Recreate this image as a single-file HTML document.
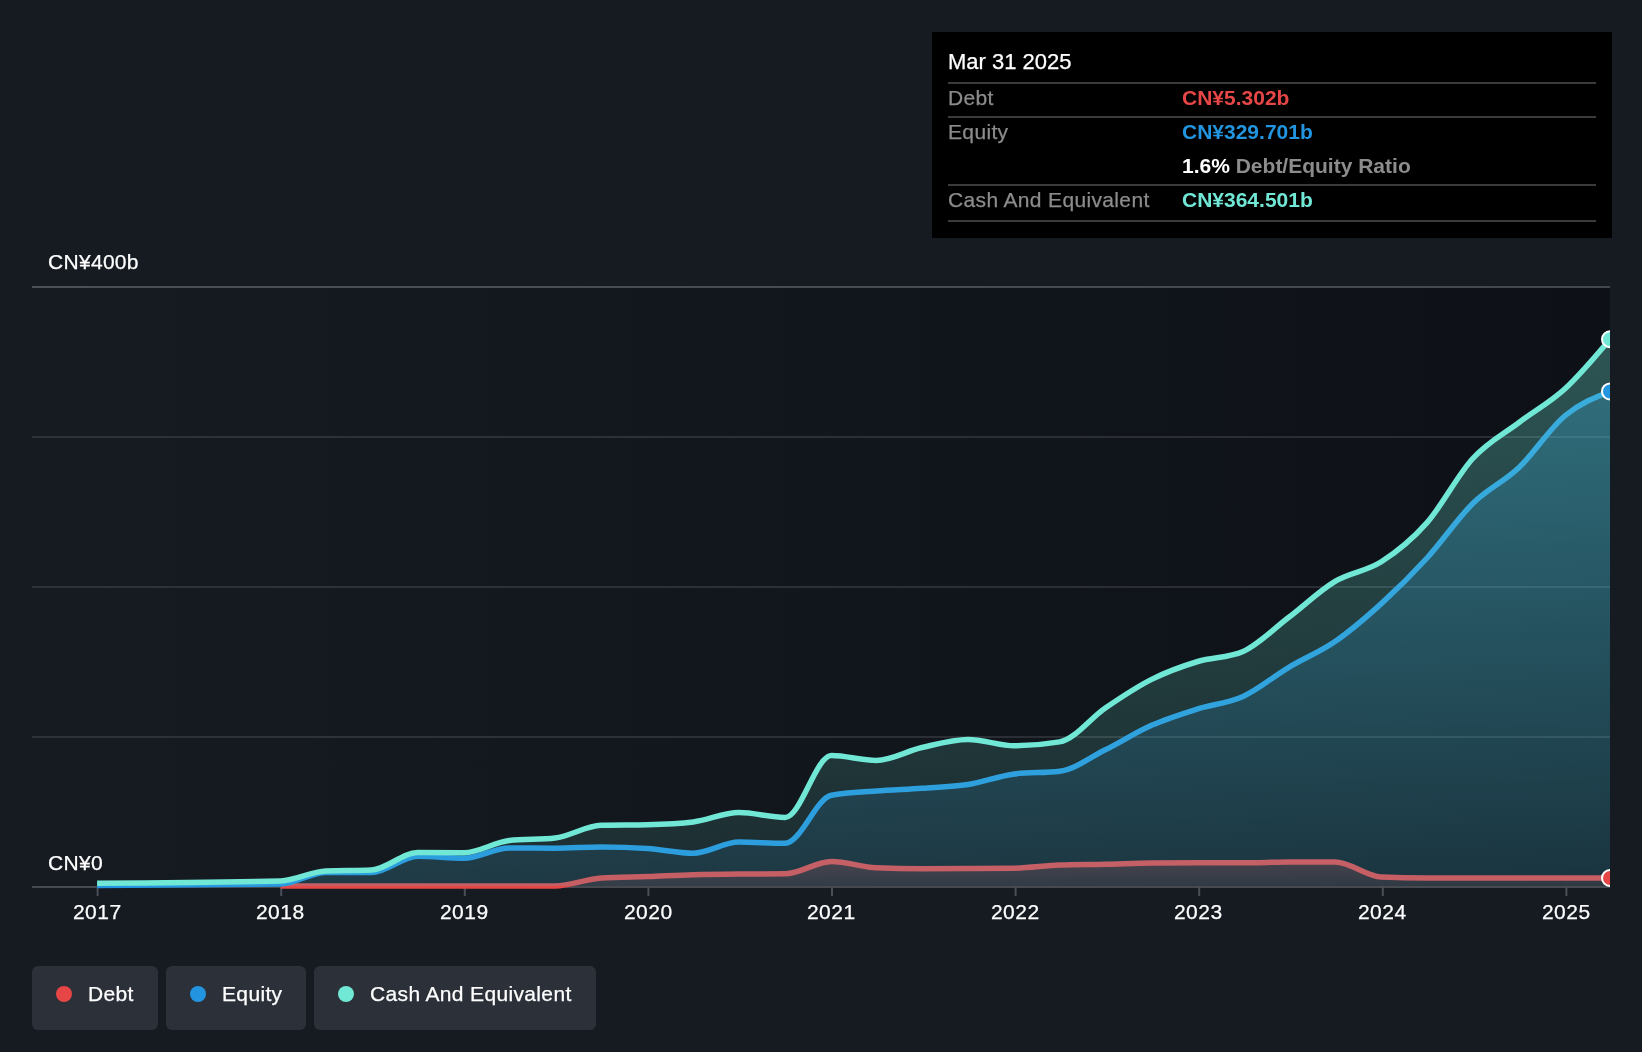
<!DOCTYPE html>
<html><head><meta charset="utf-8"><style>
*{margin:0;padding:0;box-sizing:border-box}
html,body{width:1642px;height:1052px;overflow:hidden;background:#161b22;font-family:"Liberation Sans",sans-serif;color:#fff}
.abs{position:absolute}
.yl,.yr,.tip .t,.tip .lb,.tip .v,.leg .lt{will-change:transform}
.yl,.yr,.tip .t,.leg .lt{-webkit-text-stroke:0.25px #fff}
.tip .lb{-webkit-text-stroke:0.25px #8c8c8c}
.yl{position:absolute;left:48px;font-size:21px;line-height:24px;color:#fff;letter-spacing:0.3px}
.yr{position:absolute;top:900px;width:80px;text-align:center;font-size:21px;line-height:24px;color:#fff;letter-spacing:0.5px;text-indent:0.5px}
.tip{position:absolute;left:932px;top:32px;width:680px;height:206px;background:#000}
.tip .t{position:absolute;left:16px;top:18px;font-size:22px;line-height:24px;color:#fff}
.tip .hr{position:absolute;left:16px;width:648px;height:2px;background:#3b3b3b}
.tip .lb{position:absolute;left:16px;font-size:21px;line-height:24px;color:#8c8c8c;letter-spacing:0.35px}
.tip .v{position:absolute;left:250px;font-size:21px;line-height:24px;font-weight:bold}
.leg{position:absolute;top:966px;height:64px;background:#2c3039;border-radius:6px}
.leg .dot{position:absolute;left:24px;top:20px;width:16px;height:16px;border-radius:50%}
.leg .lt{position:absolute;left:56px;top:12px;font-size:21px;line-height:32px;color:#fff;letter-spacing:0.35px}
</style></head><body>
<svg width="1642" height="1052" style="position:absolute;left:0;top:0">
<defs>
<linearGradient id="bgg" x1="0" y1="0" x2="1" y2="0">
<stop offset="0" stop-color="#161b22"/>
<stop offset="1" stop-color="#0d1117"/>
</linearGradient>
<linearGradient id="gc" x1="0" y1="0" x2="0" y2="1">
<stop offset="0" stop-color="#71e7d6" stop-opacity="0.32"/>
<stop offset="1" stop-color="#71e7d6" stop-opacity="0.10"/>
</linearGradient>
<linearGradient id="ge" x1="0" y1="0" x2="0" y2="1">
<stop offset="0" stop-color="#2394df" stop-opacity="0.30"/>
<stop offset="1" stop-color="#2394df" stop-opacity="0.11"/>
</linearGradient>
<linearGradient id="gd" x1="0" y1="0" x2="0" y2="1">
<stop offset="0" stop-color="#e64646" stop-opacity="0.25"/>
<stop offset="1" stop-color="#e64646" stop-opacity="0.12"/>
</linearGradient>
<linearGradient id="gl1" gradientUnits="userSpaceOnUse" x1="32" y1="0" x2="1610" y2="0"><stop offset="0" stop-color="#4b4f57"/><stop offset="1" stop-color="#44474d"/></linearGradient>
<linearGradient id="gl2" gradientUnits="userSpaceOnUse" x1="32" y1="0" x2="1610" y2="0"><stop offset="0" stop-color="#2e323a"/><stop offset="1" stop-color="#292c32"/></linearGradient>
<clipPath id="clip"><rect x="32" y="0" width="1578" height="1052"/></clipPath>
</defs>
<rect x="32" y="286" width="1578" height="600" fill="url(#bgg)"/>
<g fill="none" stroke-width="2">
<rect x="32" y="286" width="1578" height="2" fill="url(#gl1)"/>
<rect x="32" y="436" width="1578" height="2" fill="url(#gl2)"/>
<rect x="32" y="586" width="1578" height="2" fill="url(#gl2)"/>
<rect x="32" y="736" width="1578" height="2" fill="url(#gl2)"/>
</g>
<line x1="32" y1="887" x2="1610" y2="887" stroke="#46494f" stroke-width="2"/>
<line x1="97.6" y1="886" x2="97.6" y2="896" stroke="#4a4e56" stroke-width="2"/><line x1="281.2" y1="886" x2="281.2" y2="896" stroke="#4a4e56" stroke-width="2"/><line x1="464.8" y1="886" x2="464.8" y2="896" stroke="#4a4e56" stroke-width="2"/><line x1="648.4" y1="886" x2="648.4" y2="896" stroke="#4a4e56" stroke-width="2"/><line x1="832.0" y1="886" x2="832.0" y2="896" stroke="#4a4e56" stroke-width="2"/><line x1="1015.6" y1="886" x2="1015.6" y2="896" stroke="#4a4e56" stroke-width="2"/><line x1="1199.2" y1="886" x2="1199.2" y2="896" stroke="#4a4e56" stroke-width="2"/><line x1="1382.8" y1="886" x2="1382.8" y2="896" stroke="#4a4e56" stroke-width="2"/><line x1="1566.4" y1="886" x2="1566.4" y2="896" stroke="#4a4e56" stroke-width="2"/>
<g clip-path="url(#clip)">
<path d="M280.56,886.00C295.63,886.00 310.71,886.00 325.79,886.00C341.04,886.00 356.28,886.00 371.53,886.00C386.94,886.00 402.36,886.00 417.77,886.00C433.19,886.00 448.60,886.00 464.01,886.00C479.09,886.00 494.17,886.00 509.25,886.00C524.50,886.00 539.74,886.00 554.99,886.00C570.40,886.00 585.82,879.00 601.23,878.00C616.64,877.00 632.06,877.05 647.47,876.50C662.72,875.95 677.96,875.12 693.21,874.70C708.46,874.28 723.70,874.13 738.95,874.00C754.36,873.87 769.78,873.93 785.19,873.80C800.61,873.67 816.02,861.40 831.43,861.40C846.34,861.40 861.26,867.15 876.17,867.80C891.41,868.47 906.66,868.80 921.91,868.80C937.32,868.80 952.73,868.60 968.15,868.50C983.56,868.40 998.97,868.40 1014.39,868.20C1029.47,868.00 1044.55,865.53 1059.63,865.00C1074.87,864.47 1090.12,864.53 1105.36,864.20C1120.78,863.87 1136.19,863.13 1151.61,863.00C1167.02,862.87 1182.43,862.80 1197.85,862.80C1212.93,862.80 1228.00,862.80 1243.08,862.80C1258.33,862.80 1273.58,862.00 1288.82,862.00C1304.24,862.00 1319.65,862.00 1335.06,862.00C1350.48,862.00 1365.89,876.33 1381.31,877.00C1396.55,877.67 1411.80,878.00 1427.04,878.00C1442.29,878.00 1457.54,878.00 1472.78,878.00C1488.20,878.00 1503.61,878.00 1519.02,878.00C1534.44,878.00 1549.85,878.00 1565.27,878.00C1580.18,878.00 1595.09,878.00 1610.00,878.00L1610.00,886 L280.56,886Z" fill="url(#gd)"/>
<path d="M280.56,886.00C295.63,886.00 310.71,886.00 325.79,886.00C341.04,886.00 356.28,886.00 371.53,886.00C386.94,886.00 402.36,886.00 417.77,886.00C433.19,886.00 448.60,886.00 464.01,886.00C479.09,886.00 494.17,886.00 509.25,886.00C524.50,886.00 539.74,886.00 554.99,886.00C570.40,886.00 585.82,879.00 601.23,878.00C616.64,877.00 632.06,877.05 647.47,876.50C662.72,875.95 677.96,875.12 693.21,874.70C708.46,874.28 723.70,874.13 738.95,874.00C754.36,873.87 769.78,873.93 785.19,873.80C800.61,873.67 816.02,861.40 831.43,861.40C846.34,861.40 861.26,867.15 876.17,867.80C891.41,868.47 906.66,868.80 921.91,868.80C937.32,868.80 952.73,868.60 968.15,868.50C983.56,868.40 998.97,868.40 1014.39,868.20C1029.47,868.00 1044.55,865.53 1059.63,865.00C1074.87,864.47 1090.12,864.53 1105.36,864.20C1120.78,863.87 1136.19,863.13 1151.61,863.00C1167.02,862.87 1182.43,862.80 1197.85,862.80C1212.93,862.80 1228.00,862.80 1243.08,862.80C1258.33,862.80 1273.58,862.00 1288.82,862.00C1304.24,862.00 1319.65,862.00 1335.06,862.00C1350.48,862.00 1365.89,876.33 1381.31,877.00C1396.55,877.67 1411.80,878.00 1427.04,878.00C1442.29,878.00 1457.54,878.00 1472.78,878.00C1488.20,878.00 1503.61,878.00 1519.02,878.00C1534.44,878.00 1549.85,878.00 1565.27,878.00C1580.18,878.00 1595.09,878.00 1610.00,878.00" fill="none" stroke="#e64646" stroke-width="5.5"/>
<path d="M97.10,885.50C158.25,885.25 219.40,885.00 280.56,884.00C295.63,883.75 310.71,872.50 325.79,872.50C341.04,872.50 356.28,872.60 371.53,872.60C386.94,872.60 402.36,856.20 417.77,856.20C433.19,856.20 448.60,858.20 464.01,858.20C479.09,858.20 494.17,847.90 509.25,847.90C524.50,847.90 539.74,848.20 554.99,848.20C570.40,848.20 585.82,847.00 601.23,847.00C616.64,847.00 632.06,847.50 647.47,848.50C662.72,849.49 677.96,853.30 693.21,853.30C708.46,853.30 723.70,842.10 738.95,842.10C754.36,842.10 769.78,843.20 785.19,843.20C800.61,843.20 816.02,798.26 831.43,795.30C846.34,792.43 861.26,792.18 876.17,791.00C891.41,789.80 906.66,789.28 921.91,788.20C937.32,787.11 952.73,786.87 968.15,784.50C983.56,782.13 998.97,775.91 1014.39,774.00C1029.47,772.13 1044.55,773.07 1059.63,771.20C1074.87,769.31 1090.12,757.40 1105.36,749.80C1120.78,742.11 1136.19,732.12 1151.61,725.30C1167.02,718.48 1182.43,713.74 1197.85,708.90C1212.93,704.17 1228.00,703.36 1243.08,696.50C1258.33,689.56 1273.58,676.42 1288.82,667.30C1304.24,658.08 1319.65,652.12 1335.06,641.50C1350.48,630.88 1365.89,617.61 1381.31,603.60C1396.55,589.74 1411.80,574.68 1427.04,558.00C1442.29,541.32 1457.54,518.54 1472.78,503.50C1488.20,488.30 1503.61,482.17 1519.02,467.50C1534.44,452.83 1549.85,428.24 1565.27,415.50C1580.18,403.18 1595.09,397.32 1610.00,391.45L1610.00,886 L97.10,886Z" fill="url(#ge)"/>
<path d="M97.10,885.50C158.25,885.25 219.40,885.00 280.56,884.00C295.63,883.75 310.71,872.50 325.79,872.50C341.04,872.50 356.28,872.60 371.53,872.60C386.94,872.60 402.36,856.20 417.77,856.20C433.19,856.20 448.60,858.20 464.01,858.20C479.09,858.20 494.17,847.90 509.25,847.90C524.50,847.90 539.74,848.20 554.99,848.20C570.40,848.20 585.82,847.00 601.23,847.00C616.64,847.00 632.06,847.50 647.47,848.50C662.72,849.49 677.96,853.30 693.21,853.30C708.46,853.30 723.70,842.10 738.95,842.10C754.36,842.10 769.78,843.20 785.19,843.20C800.61,843.20 816.02,798.26 831.43,795.30C846.34,792.43 861.26,792.18 876.17,791.00C891.41,789.80 906.66,789.28 921.91,788.20C937.32,787.11 952.73,786.87 968.15,784.50C983.56,782.13 998.97,775.91 1014.39,774.00C1029.47,772.13 1044.55,773.07 1059.63,771.20C1074.87,769.31 1090.12,757.40 1105.36,749.80C1120.78,742.11 1136.19,732.12 1151.61,725.30C1167.02,718.48 1182.43,713.74 1197.85,708.90C1212.93,704.17 1228.00,703.36 1243.08,696.50C1258.33,689.56 1273.58,676.42 1288.82,667.30C1304.24,658.08 1319.65,652.12 1335.06,641.50C1350.48,630.88 1365.89,617.61 1381.31,603.60C1396.55,589.74 1411.80,574.68 1427.04,558.00C1442.29,541.32 1457.54,518.54 1472.78,503.50C1488.20,488.30 1503.61,482.17 1519.02,467.50C1534.44,452.83 1549.85,428.24 1565.27,415.50C1580.18,403.18 1595.09,397.32 1610.00,391.45" fill="none" stroke="#2394df" stroke-width="5.5"/>
<path d="M97.10,883.30C158.25,882.92 219.40,882.53 280.56,881.00C295.63,880.62 310.71,871.66 325.79,871.00C341.04,870.33 356.28,870.67 371.53,870.00C386.94,869.33 402.36,852.50 417.77,852.50C433.19,852.50 448.60,852.70 464.01,852.70C479.09,852.70 494.17,842.15 509.25,840.50C524.50,838.83 539.74,839.67 554.99,838.00C570.40,836.32 585.82,825.70 601.23,825.30C616.64,824.90 632.06,825.10 647.47,824.70C662.72,824.30 677.96,823.77 693.21,821.90C708.46,820.03 723.70,812.50 738.95,812.50C754.36,812.50 769.78,817.40 785.19,817.40C800.61,817.40 816.02,755.50 831.43,755.50C846.34,755.50 861.26,760.40 876.17,760.40C891.41,760.40 906.66,750.99 921.91,747.50C937.32,743.97 952.73,739.40 968.15,739.40C983.56,739.40 998.97,745.80 1014.39,745.80C1029.47,745.80 1044.55,744.50 1059.63,741.90C1074.87,739.27 1090.12,718.37 1105.36,708.00C1120.78,697.52 1136.19,687.15 1151.61,679.40C1167.02,671.65 1182.43,666.17 1197.85,661.50C1212.93,656.93 1228.00,658.17 1243.08,651.50C1258.33,644.76 1273.58,628.92 1288.82,617.30C1304.24,605.56 1319.65,590.65 1335.06,581.40C1350.48,572.15 1365.89,571.69 1381.31,561.80C1396.55,552.02 1411.80,539.82 1427.04,522.60C1442.29,505.38 1457.54,475.14 1472.78,458.50C1488.20,441.67 1503.61,434.17 1519.02,422.50C1534.44,410.83 1549.85,402.70 1565.27,388.50C1580.18,374.76 1595.09,357.01 1610.00,339.25L1610.00,886 L97.10,886Z" fill="url(#gc)"/>
<path d="M97.10,883.30C158.25,882.92 219.40,882.53 280.56,881.00C295.63,880.62 310.71,871.66 325.79,871.00C341.04,870.33 356.28,870.67 371.53,870.00C386.94,869.33 402.36,852.50 417.77,852.50C433.19,852.50 448.60,852.70 464.01,852.70C479.09,852.70 494.17,842.15 509.25,840.50C524.50,838.83 539.74,839.67 554.99,838.00C570.40,836.32 585.82,825.70 601.23,825.30C616.64,824.90 632.06,825.10 647.47,824.70C662.72,824.30 677.96,823.77 693.21,821.90C708.46,820.03 723.70,812.50 738.95,812.50C754.36,812.50 769.78,817.40 785.19,817.40C800.61,817.40 816.02,755.50 831.43,755.50C846.34,755.50 861.26,760.40 876.17,760.40C891.41,760.40 906.66,750.99 921.91,747.50C937.32,743.97 952.73,739.40 968.15,739.40C983.56,739.40 998.97,745.80 1014.39,745.80C1029.47,745.80 1044.55,744.50 1059.63,741.90C1074.87,739.27 1090.12,718.37 1105.36,708.00C1120.78,697.52 1136.19,687.15 1151.61,679.40C1167.02,671.65 1182.43,666.17 1197.85,661.50C1212.93,656.93 1228.00,658.17 1243.08,651.50C1258.33,644.76 1273.58,628.92 1288.82,617.30C1304.24,605.56 1319.65,590.65 1335.06,581.40C1350.48,572.15 1365.89,571.69 1381.31,561.80C1396.55,552.02 1411.80,539.82 1427.04,522.60C1442.29,505.38 1457.54,475.14 1472.78,458.50C1488.20,441.67 1503.61,434.17 1519.02,422.50C1534.44,410.83 1549.85,402.70 1565.27,388.50C1580.18,374.76 1595.09,357.01 1610.00,339.25" fill="none" stroke="#71e7d6" stroke-width="5.5"/>
</g>
<g clip-path="url(#clip)">
<circle cx="1610" cy="339.25" r="8" fill="#71e7d6" stroke="#fff" stroke-width="2"/>
<circle cx="1610" cy="391.45" r="8" fill="#2394df" stroke="#fff" stroke-width="2"/>
<circle cx="1610" cy="878" r="8" fill="#e64646" stroke="#fff" stroke-width="2"/>
</g>
</svg>
<div class="yl" style="top:250px">CN¥400b</div>
<div class="yl" style="top:851px">CN¥0</div>
<div class="yr" style="left:56.8px">2017</div><div class="yr" style="left:240.4px">2018</div><div class="yr" style="left:424.0px">2019</div><div class="yr" style="left:607.6px">2020</div><div class="yr" style="left:791.2px">2021</div><div class="yr" style="left:974.8px">2022</div><div class="yr" style="left:1158.4px">2023</div><div class="yr" style="left:1342.0px">2024</div><div class="yr" style="left:1525.6px">2025</div>
<div class="tip">
<div class="t">Mar 31 2025</div>
<div class="hr" style="top:50px"></div>
<div class="lb" style="top:54px">Debt</div><div class="v" style="top:54px;color:#e64646">CN¥5.302b</div>
<div class="hr" style="top:84px"></div>
<div class="lb" style="top:88px">Equity</div><div class="v" style="top:88px;color:#2394df">CN¥329.701b</div>
<div class="v" style="top:122px;color:#fff">1.6% <span style="color:#8c8c8c">Debt/Equity Ratio</span></div>
<div class="hr" style="top:152px"></div>
<div class="lb" style="top:156px">Cash And Equivalent</div><div class="v" style="top:156px;color:#71e7d6">CN¥364.501b</div>
<div class="hr" style="top:188px"></div>
</div>
<div class="leg" style="left:32px;width:126px"><div class="dot" style="background:#e64646"></div><div class="lt">Debt</div></div>
<div class="leg" style="left:166px;width:140px"><div class="dot" style="background:#2394df"></div><div class="lt">Equity</div></div>
<div class="leg" style="left:314px;width:282px"><div class="dot" style="background:#71e7d6"></div><div class="lt">Cash And Equivalent</div></div>
</body></html>
